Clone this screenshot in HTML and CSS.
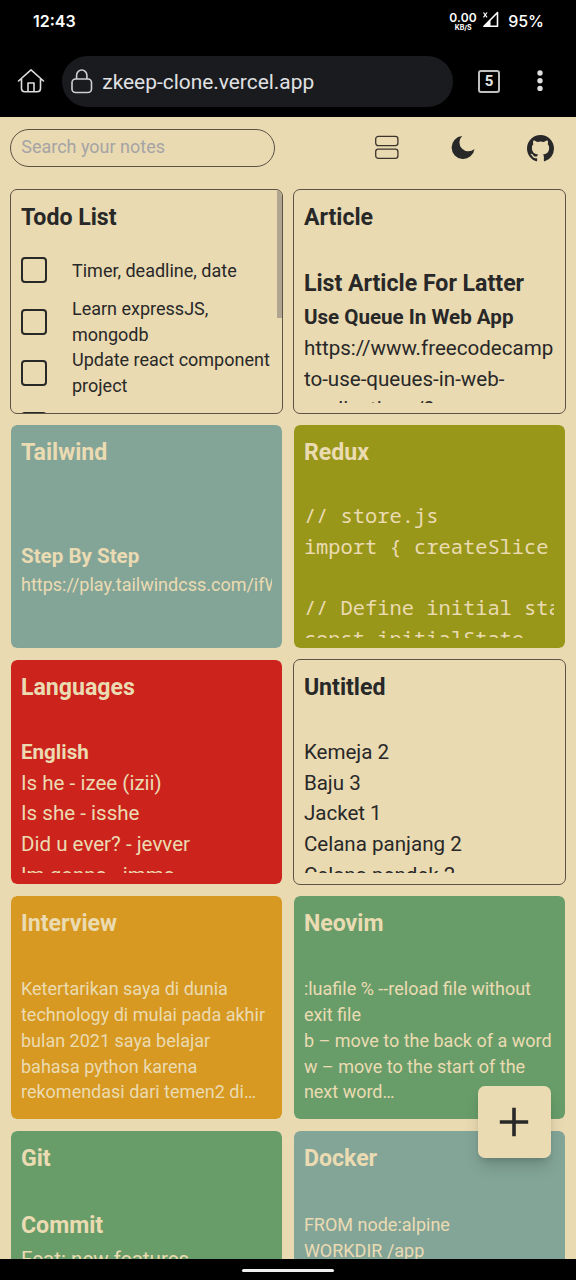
FILE: index.html
```html
<!DOCTYPE html>
<html lang="en">
<head>
<meta charset="utf-8">
<title>zkeep</title>
<link rel="stylesheet" href="styles.css">
</head>
<body>
<div class="phone">
  <header class="status">
    <span class="clock">12:43</span>
    <div class="indicators">
      <div class="speed"><span class="rate">0.00</span><span class="unit">KB/S</span></div>
      <svg class="signal" width="17" height="17" viewBox="0 0 17 17"><path d="M2 15.200 15.500 1.500V15.200Z" fill="none" stroke="#fff" stroke-width="1.600" stroke-linejoin="round"/><path d="M1 16 8.500 8V16Z" fill="#fff"/><path d="m1.500 1.500 3.500 4.800M5 1.500 1.500 6.300" stroke="#fff" stroke-width="1.200"/></svg>
      <span class="battery">95%</span>
    </div>
  </header>
  <nav class="browser">
    <svg class="home" width="28" height="26" viewBox="0 0 28 26" fill="none" stroke="#dcdcdc" stroke-width="1.600" stroke-linecap="round" stroke-linejoin="round"><path d="M1.500 13 14 1.800 26.500 13M4.500 11V20.500Q4.500 23.700 7.700 23.700H20.300Q23.500 23.700 23.500 20.500V11M11 23.500V15H17V23.500"/></svg>
    <div class="address">
      <svg width="22" height="25" viewBox="0 0 22 25" fill="none" stroke="#cfd0d2" stroke-width="1.600"><rect x="1" y="10" width="19.500" height="13.500" rx="3.500"/><path d="M5.600 10V6.200a5.150 5.150 0 0 1 10.300 0V10"/></svg>
      <span>zkeep-clone.vercel.app</span>
    </div>
    <div class="tabs">5</div>
    <svg class="menu" width="8" height="24" viewBox="0 0 8 24" fill="#dedede"><circle cx="4" cy="4" r="2.700"/><circle cx="4" cy="11.700" r="2.700"/><circle cx="4" cy="19.400" r="2.700"/></svg>
  </nav>
  <main class="app">
    <div class="toolbar">
      <div class="search">Search your notes</div>
      <div class="actions">
        <svg width="26" height="26" viewBox="0 0 26 26" fill="none" stroke="#3b352c" stroke-width="1.300"><rect x="1.700" y="1.400" width="22.200" height="9.300" rx="2.600"/><rect x="1.700" y="14.100" width="22.200" height="9.300" rx="2.600"/></svg>
        <svg width="26" height="26" viewBox="0 0 26 26" fill="#282828"><path d="M12.200 1A11.500 11.500 0 1 0 24.500 13.900 8.600 8.600 0 0 1 12.200 1Z"/></svg>
        <svg width="27" height="27" viewBox="0 0 16 16" fill="#282828"><path d="M8 0C3.580 0 0 3.580 0 8c0 3.540 2.290 6.530 5.470 7.590.4.070.55-.17.55-.38 0-.19-.01-.82-.01-1.490-2.010.37-2.530-.49-2.690-.94-.09-.23-.48-.94-.82-1.130-.28-.15-.68-.52-.01-.53.63-.01 1.080.58 1.230.82.72 1.210 1.870.87 2.330.66.07-.52.28-.87.51-1.070-1.780-.2-3.640-.89-3.640-3.950 0-.87.31-1.590.82-2.150-.08-.2-.36-1.020.08-2.120 0 0 .67-.21 2.200.82a7.600 7.600 0 0 1 4 0c1.530-1.040 2.200-.82 2.200-.82.44 1.100.16 1.920.08 2.120.51.56.82 1.270.82 2.150 0 3.070-1.870 3.750-3.650 3.950.29.25.54.73.54 1.480 0 1.070-.01 1.930-.01 2.200 0 .21.15.46.55.38A8.010 8.010 0 0 0 16 8c0-4.420-3.580-8-8-8Z"/></svg>
      </div>
    </div>
    <div class="notes">
      <article class="note outlined todo">
        <h2>Todo List</h2>
        <ul>
          <li><i class="box"></i><span>Timer, deadline, date</span></li>
          <li><i class="box"></i><span>Learn expressJS, mongodb</span></li>
          <li><i class="box"></i><span>Update react component project</span></li>
          <li><i class="box"></i></li>
        </ul>
        <div class="scrollbar"></div>
      </article>
      <article class="note outlined">
        <h2>Article</h2>
        <div class="body">
          <h3>List Article For Latter</h3>
          <h4>Use Queue In Web App</h4>
          <p>https://www.freecodecamp.<br>to-use-queues-in-web-<br>applications/?</p>
        </div>
      </article>
      <article class="note blue">
        <h2>Tailwind</h2>
        <div class="body spaced">
          <h4>Step By Step</h4>
          <p class="small nowrap">https://play.tailwindcss.com/ifW</p>
        </div>
      </article>
      <article class="note olive">
        <h2>Redux</h2>
        <pre class="body">// store.js
import { createSlice

// Define initial state
const initialState</pre>
      </article>
      <article class="note red">
        <h2>Languages</h2>
        <div class="body">
          <h4>English</h4>
          <p>Is he - izee (izii)<br>Is she - isshe<br>Did u ever? - jevver<br>Im gonna - imma</p>
        </div>
      </article>
      <article class="note outlined">
        <h2>Untitled</h2>
        <div class="body"><p>Kemeja 2<br>Baju 3<br>Jacket 1<br>Celana panjang 2<br>Celana pendek 2</p></div>
      </article>
      <article class="note yellow">
        <h2>Interview</h2>
        <div class="body plain"><p class="small">Ketertarikan saya di dunia<br>technology di mulai pada akhir<br>bulan 2021 saya belajar<br>bahasa python karena<br>rekomendasi dari temen2 di…</p></div>
      </article>
      <article class="note green">
        <h2>Neovim</h2>
        <div class="body plain"><p class="small">:luafile % --reload file without<br>exit file<br>b – move to the back of a word<br>w – move to the start of the<br>next word…</p></div>
      </article>
      <article class="note green">
        <h2>Git</h2>
        <div class="body">
          <h3>Commit</h3>
          <p>Feat: new features</p>
        </div>
      </article>
      <article class="note blue">
        <h2>Docker</h2>
        <div class="body plain"><p class="small">FROM node:alpine<br>WORKDIR /app</p></div>
      </article>
    </div>
    <div class="add"><svg width="30" height="30" viewBox="0 0 30 30" stroke="#282828" stroke-width="3.600"><path d="M15 .8V29.200M.8 15H29.200"/></svg></div>
  </main>
  <footer class="gesture"><span></span></footer>
</div>
</body>
</html>
```
FILE: styles.css
```css
* { box-sizing: border-box; margin: 0; padding: 0; }
body { background: #000; font-family: Roboto, "Noto Sans", sans-serif; color: #282828; }
.phone { width: 576px; height: 1280px; overflow: hidden; display: flex; flex-direction: column; }

.status { height: 45px; flex: none; display: flex; justify-content: space-between; align-items: center; padding: 0 32px 3px 33px; color: #fff; font-family: Inter, sans-serif; font-size: 16px; font-weight: 600; }
.indicators { display: flex; align-items: center; }
.speed { display: flex; flex-direction: column; align-items: center; width: 28px; padding-top: 1px; }
.rate { font-size: 12px; line-height: 12px; letter-spacing: .2px; }
.unit { font-size: 7px; line-height: 8px; font-weight: 700; }
.signal { margin: 0 9px 3px 5px; }
.battery { font-weight: 500; }

.browser { height: 72px; flex: none; display: flex; align-items: center; padding: 0 0 0 17px; }
.address { width: 391px; height: 51px; margin-left: 17px; border-radius: 26px; background: #1a1b1f; display: flex; align-items: center; padding-left: 9px; gap: 9.300px; color: #e0e1e3; font-size: 20.900px; }
.address span { padding-top: 1px; }
.tabs { width: 22px; height: 23px; margin-left: 25px; border: 2px solid #c0c0c0; border-radius: 3px; color: #e6e6e6; font-size: 15px; font-weight: 700; line-height: 19px; text-align: center; }
.menu { margin-left: 36px; }

.app { position: relative; flex: none; height: 1142px; overflow: hidden; background: #e9dab2; padding: 12px 10.300px 0; }
.toolbar { display: flex; align-items: center; justify-content: space-between; height: 38px; }
.search { width: 265px; height: 38px; border: 1px solid #5a5242; border-radius: 19px; padding-left: 9.900px; color: #a5a3a5; font-size: 18px; line-height: 34px; }
.actions { display: flex; align-items: center; gap: 50.500px; padding-right: 12px; }

.notes { display: grid; grid-template-columns: 272.600px 272.600px; grid-auto-rows: 225.300px; column-gap: 10.300px; row-gap: 10.150px; margin-top: 21.550px; }
.note { position: relative; overflow: hidden; border: 1px solid #e9dab2; border-radius: 7px; padding: 12px 10.300px 10.300px 9.700px; display: flex; flex-direction: column; color: #ebdbb2; background-clip: padding-box; }
.outlined { border-color: #5c5344; color: #282828; }
.blue { background-color: #83a598; }
.olive { background-color: #98971a; }
.red { background-color: #cc241d; }
.yellow { background-color: #d79921; }
.green { background-color: #689d6a; }

h2 { flex: none; height: 64.300px; font-size: 23.140px; line-height: 31px; font-weight: 700; }
h3 { font-size: 23.140px; line-height: 36px; font-weight: 700; }
h4 { font-size: 20.570px; line-height: 30.860px; font-weight: 700; }
.body { flex: 1; min-height: 0; overflow: hidden; font-size: 20.570px; line-height: 30.860px; white-space: nowrap; }
pre.body { font-family: "Noto Sans Mono", "DejaVu Sans Mono", monospace; font-size: 20.400px; line-height: 30.700px; white-space: pre; margin-top: -1px; }
.small { font-size: 18px; line-height: 25.710px; }
.plain { padding-top: 4.300px; }
.spaced { padding-top: 40px; }

.todo h2 { height: 43.100px; }
.todo ul { list-style: none; }
.todo li { height: 51.430px; display: flex; align-items: center; gap: 25px; font-size: 18px; line-height: 25.710px; }
.todo li span { width: 200px; }
.box { flex: none; width: 26px; height: 26px; border: 2px solid #282828; border-radius: 4px; }
.scrollbar { position: absolute; right: -1px; top: -1px; width: 6px; height: 129px; background: #b0a591; }

.add { position: absolute; left: 478px; top: 969px; width: 72.500px; height: 72px; border-radius: 7px; background: #ebdbb2; display: grid; place-items: center; box-shadow: 0 10px 16px -2px rgba(0, 0, 0, .16), 0 4px 6px -3px rgba(0, 0, 0, .15); }

.gesture { flex: 1; display: flex; justify-content: center; padding-top: 10px; }
.gesture span { width: 92px; height: 3px; border-radius: 2px; background: #f0f0f0; }
```
